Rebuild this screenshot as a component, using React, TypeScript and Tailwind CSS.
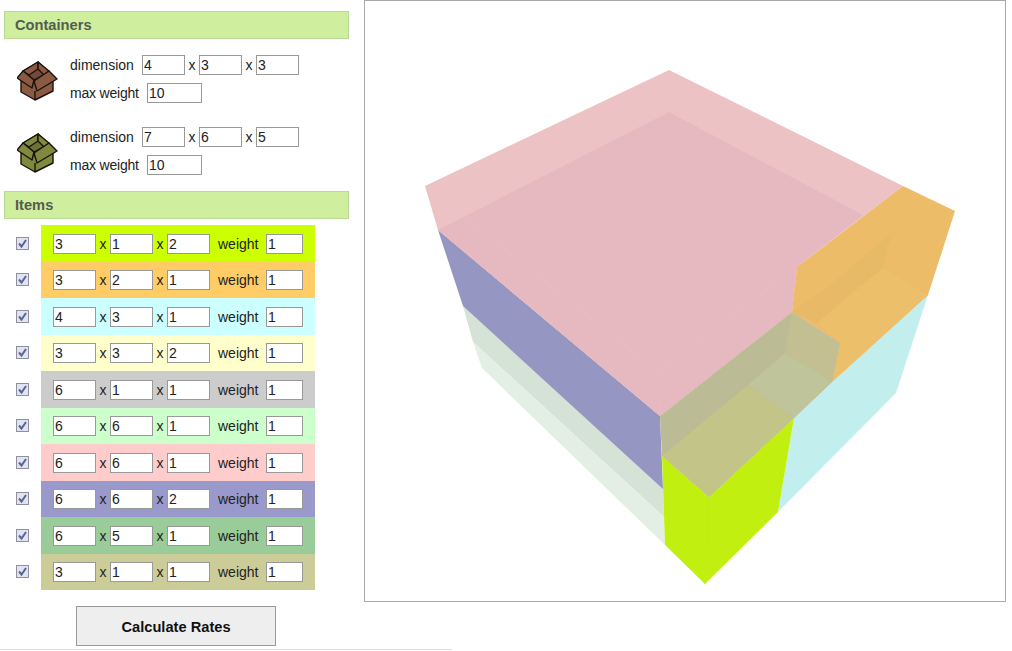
const FONT = "font-['Liberation_Sans',Arial,sans-serif]";

function Field({ value, w }: { value: string; w: string }) {
  return (
    <input
      readOnly
      defaultValue={value}
      className={`${w} h-5 shrink-0 border border-[#999999] bg-white pl-px text-[14px] leading-[18px] text-[#222222] outline-none ${FONT}`}
    />
  );
}

function SectionHeader({ title }: { title: string }) {
  return (
    <div className="ml-1 flex h-7 w-[345px] items-center border border-[#b9da95] bg-[#cfee9e] pl-[10px] text-[14.67px] font-bold text-[#555c50]">
      {title}
    </div>
  );
}

function BoxIcon({ fill, dark }: { fill: string; dark: string }) {
  return (
    <svg width="42" height="42" viewBox="0 0 42 42" className="mt-[6px] shrink-0 self-start">
      <g stroke="#1c120c" strokeWidth="1.4" strokeLinejoin="round">
        <polygon points="4,20 17,19 36,20 36,30 18,39 4,31" fill={fill} />
        <line x1="18" y1="30" x2="18" y2="39" />
        <polygon points="21,1 6,10 17,19 32,11" fill={dark} />
        <polygon points="21,1 6,10 12,14 21,8" fill={fill} />
        <polygon points="21,1 32,10 27,14 21,8" fill={fill} />
        <polygon points="6,10 0,17 15,27 17,19" fill={fill} />
        <polygon points="32,10 40,18 20,30 17,20" fill={fill} />
      </g>
    </svg>
  );
}

function ContainerRow({
  dims,
  fill,
  dark,
  className,
}: {
  dims: string[];
  fill: string;
  dark: string;
  className: string;
}) {
  return (
    <div className={`ml-[17px] flex items-center ${className}`}>
      <BoxIcon fill={fill} dark={dark} />
      <div className="ml-[11px] flex flex-col gap-2 text-[14px] text-[#222222]">
        <div className="flex h-5 items-center">
          <span className="w-[72px]">dimension</span>
          <Field value={dims[0]} w="w-[43px]" />
          <span className="w-[14px] text-center">x</span>
          <Field value={dims[1]} w="w-[43px]" />
          <span className="w-[14px] text-center">x</span>
          <Field value={dims[2]} w="w-[43px]" />
        </div>
        <div className="flex h-5 items-center">
          <span className="w-[77px] tracking-[-0.2px]">max weight</span>
          <Field value="10" w="w-[55px]" />
        </div>
      </div>
    </div>
  );
}

function Check() {
  return (
    <span className="flex h-[13px] w-[13px] items-center justify-center border border-[#8f8f9d] bg-[#dfe3f2]">
      <svg width="11" height="11" viewBox="0 0 11 11">
        <path d="M2 5.5 L4.5 8.5 L9 2" fill="none" stroke="#5a6690" strokeWidth="2" />
      </svg>
    </span>
  );
}

const items = [
  { d: ["3", "1", "2"], c: "bg-[#ccff00]" },
  { d: ["3", "2", "1"], c: "bg-[#ffcc66]" },
  { d: ["4", "3", "1"], c: "bg-[#ccffff]" },
  { d: ["3", "3", "2"], c: "bg-[#ffffcc]" },
  { d: ["6", "1", "1"], c: "bg-[#cccccc]" },
  { d: ["6", "6", "1"], c: "bg-[#ccffcc]" },
  { d: ["6", "6", "1"], c: "bg-[#ffcccc]" },
  { d: ["6", "6", "2"], c: "bg-[#9999cc]" },
  { d: ["6", "5", "1"], c: "bg-[#99cc99]" },
  { d: ["3", "1", "1"], c: "bg-[#cccc99]" },
];

function ItemRow({ d, c }: { d: string[]; c: string }) {
  return (
    <div className="flex h-[36.5px] items-center">
      <div className="ml-4 w-[25px]">
        <Check />
      </div>
      <div className={`flex h-full w-[274px] items-center pl-3 pt-px text-[14px] text-[#222222] ${c}`}>
        <Field value={d[0]} w="w-[43px]" />
        <span className="mt-[0.6px] w-[14px] text-center">x</span>
        <Field value={d[1]} w="w-[43px]" />
        <span className="mt-[0.6px] w-[14px] text-center">x</span>
        <Field value={d[2]} w="w-[43px]" />
        <span className="ml-2 mt-[0.6px] w-[48px]">weight</span>
        <Field value="1" w="w-[37px]" />
      </div>
    </div>
  );
}

function Scene() {
  return (
    <svg viewBox="365 1 640 600" className="block h-full w-full">
      {/* pale green layers */}
      <polygon points="463,306 663,487 664,517 473,342" fill="#d5e3d6" />
      <polygon points="473,342 664,517 665,545 482,368" fill="#e3efe5" />
      {/* blue */}
      <polygon points="438,230 660,416 663,489 463,306" fill="#9596c2" />
      {/* cyan */}
      <polygon points="928,295 896,393 778,512 794,418 832,382" fill="#c3eeee" />
      {/* lime */}
      <polygon points="662,456 709,497 794,418 778,512 705,584 665,545" fill="#c1f010" />
      <line x1="709" y1="497" x2="705" y2="584" stroke="#bfec12" strokeWidth="1" />
      {/* pink */}
      <polygon points="669,70 903,186 797,267 792,312 660,416 438,230 425,186" fill="#edc2c4" />
      <polygon points="669,112 863,215 797,267 792,312 660,416 438,230" fill="#e6b9c0" />
      <polyline points="466,218 658,372 790,272" fill="none" stroke="#e9bcc4" strokeWidth="1" />
      <line x1="658" y1="372" x2="660" y2="416" stroke="#e9bcc4" strokeWidth="1" />
      {/* orange */}
      <polygon points="903,186 955,211 928,295 832,382 840,343 792,312 797,267" fill="#ecbc68" />
      <polygon points="792,312 828,287 847,296 817,323" fill="#e8ba67" />
      <polygon points="828,287 892,233 883,268 847,296" fill="#e7ba68" />
      <polygon points="817,323 883,268 928,295 832,382 840,343" fill="#ecbf6b" />
      {/* olive tops */}
      <polygon points="660,416 792,312 840,343 832,382 794,418 709,497 662,456" fill="#bbbb96" />
      <polygon points="792,312 840,343 832,382 785,353" fill="#c3bf92" />
      <polygon points="748,385 785,353 832,382 794,418" fill="#bfc49a" />
      <polygon points="662,456 748,385 794,418 709,497" fill="#c3c488" />
    </svg>
  );
}

export default function App() {
  return (
    <div className={`flex h-[651px] w-[1012px] flex-col overflow-hidden bg-white ${FONT}`}>
      <div className="flex h-[649px]">
        <div className="flex w-[364px] shrink-0 flex-col pt-[11px]">
          <SectionHeader title="Containers" />
          <ContainerRow className="mt-4" dims={["4", "3", "3"]} fill="#8b5a42" dark="#74493a" />
          <ContainerRow className="mt-6" dims={["7", "6", "5"]} fill="#7e8a3e" dark="#6a7532" />
          <div className="mt-4">
            <SectionHeader title="Items" />
          </div>
          <div className="mt-[6px] flex flex-col">
            {items.map((it, i) => (
              <ItemRow key={i} d={it.d} c={it.c} />
            ))}
          </div>
          <button className="ml-[76px] mt-4 h-10 w-[200px] border border-[#999999] bg-[#eeeeee] pt-px text-[14.67px] font-bold text-[#111111]">
            Calculate Rates
          </button>
        </div>
        <div className="h-[602px] w-[642px] shrink-0 border border-[#aaaaaa] bg-white">
          <Scene />
        </div>
      </div>
      <div className="h-px w-[452px] bg-[#dddddd]" />
    </div>
  );
}
